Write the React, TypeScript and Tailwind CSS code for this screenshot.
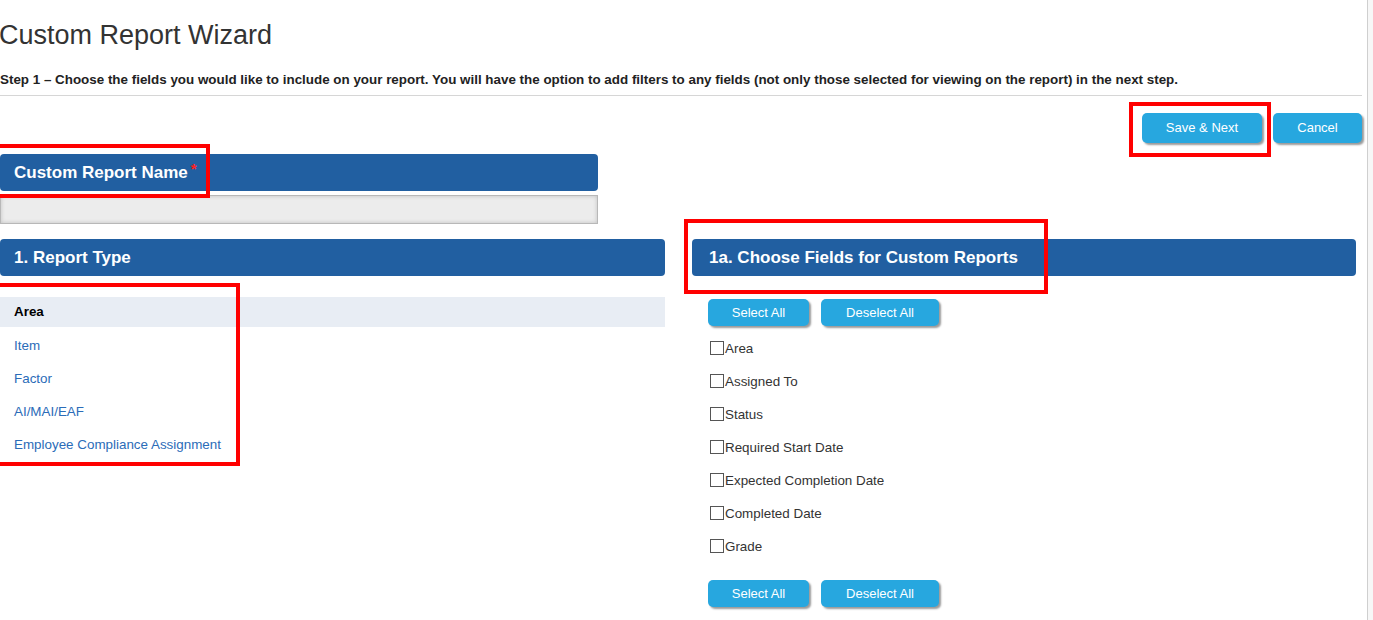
import React from "react";

const reportTypes = ["Area", "Item", "Factor", "AI/MAI/EAF", "Employee Compliance Assignment"];
const fields = [
  "Area",
  "Assigned To",
  "Status",
  "Required Start Date",
  "Expected Completion Date",
  "Completed Date",
  "Grade",
];

const BlueButton: React.FC<{ label: string; width: string }> = ({ label, width }) => (
  <button
    className={`${width} h-[27px] rounded-[5px] bg-[#27a7df] text-[13px] text-white shadow-[2px_2px_2px_rgba(0,0,0,0.4)]`}
  >
    {label}
  </button>
);

const SectionHeader: React.FC<{ children: React.ReactNode; pad?: string }> = ({ children, pad = "pl-[14px]" }) => (
  <div className={`h-[37px] rounded-[4px] bg-[#215fa1] ${pad} flex items-center text-[17px] font-bold text-white`}>
    {children}
  </div>
);

const Mark: React.FC<{ className: string }> = ({ className }) => (
  <div className={`absolute border-[4px] border-[#ff0000] pointer-events-none ${className}`} />
);

const App: React.FC = () => {
  return (
    <div
      className="relative flex min-h-[620px] bg-white text-[#333]"
      style={{ fontFamily: '"Liberation Sans", Arial, sans-serif' }}
    >
      <div className="w-[1367px] pr-[5px]">
        <h1 className="pt-[19px] text-[27px] leading-[32px] text-[#333] ml-[-1px]">Custom Report Wizard</h1>
        <p className="mt-[21px] text-[13.4px] leading-[16px] font-bold text-[#222] whitespace-nowrap">
          Step 1 – Choose the fields you would like to include on your report. You will have the option to add filters to any
          fields (not only those selected for viewing on the report) in the next step.
        </p>
        <div className="mt-[7px] border-t border-[#d6d6d6]" />

        <div className="mt-[17px] flex justify-end gap-[11px]">
          <button className="w-[120px] h-[30px] rounded-[5px] bg-[#27a7df] text-[13px] text-white shadow-[2px_2px_2px_rgba(0,0,0,0.4)]">
            Save &amp; Next
          </button>
          <button className="w-[89px] h-[30px] rounded-[5px] bg-[#27a7df] text-[13px] text-white shadow-[2px_2px_2px_rgba(0,0,0,0.4)]">
            Cancel
          </button>
        </div>

        <div className="mt-[11px] w-[598px]">
          <SectionHeader>
            Custom Report Name
            <span className="relative top-[-3px] ml-[3px] text-[15px] font-bold text-[#ff2020]">*</span>
          </SectionHeader>
          <div className="mt-[4px] h-[29px] border border-[#b8b8b8] bg-[#ececec] shadow-[inset_0_0_4px_rgba(0,0,0,0.18)]" />
        </div>

        <div className="mt-[15px] flex gap-[27px]">
          <div className="w-[665px]">
            <SectionHeader>1. Report Type</SectionHeader>
            <ul className="mt-[21px]">
              {reportTypes.map((t, i) =>
                i === 0 ? (
                  <li key={t} className="h-[30px] mb-[3px] bg-[#e8edf4] pl-[14px] pt-[1px] flex items-center text-[13.4px] font-bold text-black">
                    {t}
                  </li>
                ) : (
                  <li key={t} className="h-[33px] pl-[14px] flex items-center text-[13.4px] text-[#2b6cb8]">
                    {t}
                  </li>
                )
              )}
            </ul>
          </div>

          <div className="w-[664px]">
            <SectionHeader pad="pl-[17px]">1a. Choose Fields for Custom Reports</SectionHeader>
            <div className="mt-[23px] pl-[16px] flex gap-[12px]">
              <BlueButton label="Select All" width="w-[101px]" />
              <BlueButton label="Deselect All" width="w-[118px]" />
            </div>
            <div className="mt-[7px] pl-[18px]">
              {fields.map((f) => (
                <label key={f} className="h-[33px] flex items-center text-[13.4px] text-[#333]">
                  <span className="w-[14px] h-[14px] border border-[#555] bg-white mb-[4px]" />
                  <span className="ml-[1px]">{f}</span>
                </label>
              ))}
            </div>
            <div className="mt-[16px] pl-[16px] flex gap-[12px]">
              <BlueButton label="Select All" width="w-[101px]" />
              <BlueButton label="Deselect All" width="w-[118px]" />
            </div>
          </div>
        </div>
      </div>
      <div className="flex-1 border-l border-[#cfcfcf] bg-[#f7f7f7]" />

      <Mark className="left-[1129px] top-[102px] w-[142px] h-[55px]" />
      <Mark className="left-[-4px] top-[144px] w-[214px] h-[54px]" />
      <Mark className="left-[-4px] top-[283px] w-[244px] h-[183px]" />
      <Mark className="left-[684px] top-[219px] w-[364px] h-[75px]" />
    </div>
  );
};

export default App;
